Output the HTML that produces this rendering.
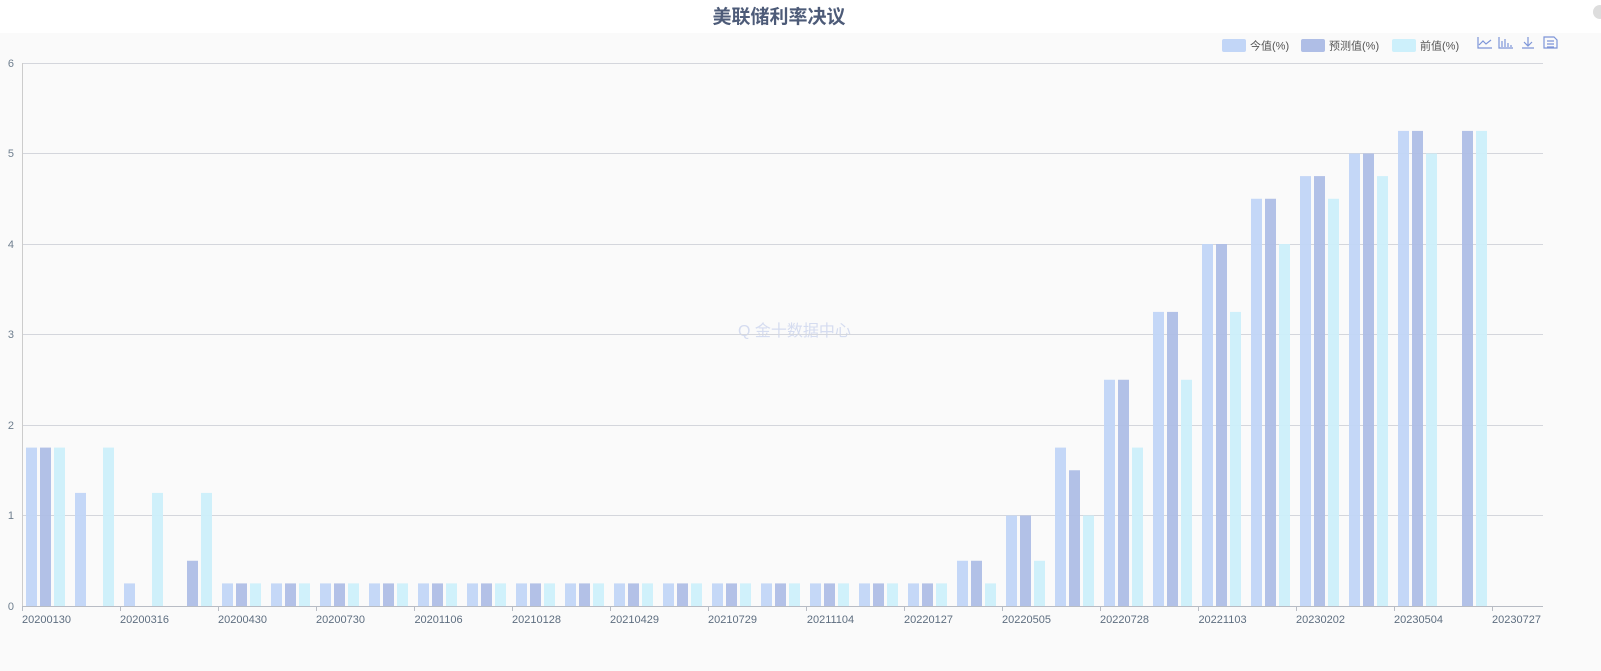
<!DOCTYPE html>
<html><head><meta charset="utf-8"><style>
html,body{margin:0;padding:0;width:1601px;height:671px;overflow:hidden;background:#fafafa;font-family:"Liberation Sans","Noto Sans CJK SC",sans-serif}
</style></head><body>
<svg width="1601" height="671" viewBox="0 0 1601 671" xmlns="http://www.w3.org/2000/svg" style="position:absolute;left:0;top:0">
<rect x="0" y="0" width="1601" height="33" fill="#fff"/>
<rect x="0" y="33" width="1601" height="638" fill="#fafafa"/>
<circle cx="1600" cy="12" r="7" fill="#ddd"/>
<text x="779" y="23" text-anchor="middle" font-size="19" font-weight="bold" fill="#4d5b78" font-family="Liberation Sans,Noto Sans CJK SC,sans-serif">美联储利率决议</text>
<!-- legend -->
<rect x="1222" y="39" width="24" height="13" rx="2" fill="#c2d6f7"/>
<text x="1250" y="49.5" font-size="11" fill="#555" font-family="Liberation Sans,Noto Sans CJK SC,sans-serif">今值(%)</text>
<rect x="1301" y="39" width="24" height="13" rx="2" fill="#afbee6"/>
<text x="1329" y="49.5" font-size="11" fill="#555" font-family="Liberation Sans,Noto Sans CJK SC,sans-serif">预测值(%)</text>
<rect x="1392" y="39" width="24" height="13" rx="2" fill="#cdf0fb"/>
<text x="1420" y="49.5" font-size="11" fill="#555" font-family="Liberation Sans,Noto Sans CJK SC,sans-serif">前值(%)</text>
<!-- toolbox icons -->
<g fill="none" stroke="#7d95d8" stroke-width="1.2">
<path d="M1478 37v11h14"/><path d="M1479 45l4-4 3 3 5-4"/>
<path d="M1499 37v11h14"/><path d="M1502 47v-6M1505 47v-8M1508 47v-4M1511 47v-2"/>
<path d="M1528 37v8M1524 42l4 4 4-4M1522 48h12"/>
<path d="M1544 37h10l3 3v8h-13z"/><path d="M1547 41h7M1547 44h7M1547 47h7"/>
</g>
<!-- watermark -->
<text x="738" y="336" font-size="16" fill="#d5dcf0" font-family="Liberation Sans,Noto Sans CJK SC,sans-serif">Q 金十数据中心</text>
<!-- grid -->
<g stroke="#d4d6dc" stroke-width="1">
<line x1="22" y1="63.5" x2="1543" y2="63.5"/>
<line x1="22" y1="153.5" x2="1543" y2="153.5"/>
<line x1="22" y1="244.5" x2="1543" y2="244.5"/>
<line x1="22" y1="334.5" x2="1543" y2="334.5"/>
<line x1="22" y1="425.5" x2="1543" y2="425.5"/>
<line x1="22" y1="515.5" x2="1543" y2="515.5"/>
</g>
<line x1="22.5" y1="63" x2="22.5" y2="606" stroke="#ccc"/>
<g font-size="11" fill="#6e7e8e" text-anchor="end" font-family="Liberation Sans,sans-serif">
<text x="14" y="67">6</text><text x="14" y="157">5</text><text x="14" y="248">4</text><text x="14" y="338">3</text><text x="14" y="429">2</text><text x="14" y="519">1</text><text x="14" y="610">0</text>
</g>
<defs>
<g id="q"><rect x="4" y="583.4" width="11" height="22.6" fill="#c2d6f7" opacity=".95"/><rect x="18" y="583.4" width="11" height="22.6" fill="#afbee6" opacity=".95"/><rect x="32" y="583.4" width="11" height="22.6" fill="#cdf0fb" opacity=".95"/></g>
</defs>
<g opacity=".95">
<!-- c1 -->
<rect x="26" y="447.6" width="11" height="158.4" fill="#c2d6f7"/><rect x="40" y="447.6" width="11" height="158.4" fill="#afbee6"/><rect x="54" y="447.6" width="11" height="158.4" fill="#cdf0fb"/>
<!-- c2 -->
<rect x="75" y="492.9" width="11" height="113.1" fill="#c2d6f7"/><rect x="103" y="447.6" width="11" height="158.4" fill="#cdf0fb"/>
<!-- c3 -->
<rect x="124" y="583.4" width="11" height="22.6" fill="#c2d6f7"/><rect x="152" y="492.9" width="11" height="113.1" fill="#cdf0fb"/>
<!-- c4 -->
<rect x="187" y="560.75" width="11" height="45.25" fill="#afbee6"/><rect x="201" y="492.9" width="11" height="113.1" fill="#cdf0fb"/>
</g>
<use href="#q" x="218"/><use href="#q" x="267"/><use href="#q" x="316"/><use href="#q" x="365"/><use href="#q" x="414"/><use href="#q" x="463"/><use href="#q" x="512"/><use href="#q" x="561"/><use href="#q" x="610"/><use href="#q" x="659"/><use href="#q" x="708"/><use href="#q" x="757"/><use href="#q" x="806"/><use href="#q" x="855"/><use href="#q" x="904"/>
<g opacity=".95">
<!-- c20 x=953 -->
<rect x="957" y="560.75" width="11" height="45.25" fill="#c2d6f7"/><rect x="971" y="560.75" width="11" height="45.25" fill="#afbee6"/><rect x="985" y="583.4" width="11" height="22.6" fill="#cdf0fb"/>
<!-- c21 1002 -->
<rect x="1006" y="515.5" width="11" height="90.5" fill="#c2d6f7"/><rect x="1020" y="515.5" width="11" height="90.5" fill="#afbee6"/><rect x="1034" y="560.75" width="11" height="45.25" fill="#cdf0fb"/>
<!-- c22 1051 -->
<rect x="1055" y="447.6" width="11" height="158.4" fill="#c2d6f7"/><rect x="1069" y="470.25" width="11" height="135.75" fill="#afbee6"/><rect x="1083" y="515.5" width="11" height="90.5" fill="#cdf0fb"/>
<!-- c23 1100 -->
<rect x="1104" y="379.75" width="11" height="226.25" fill="#c2d6f7"/><rect x="1118" y="379.75" width="11" height="226.25" fill="#afbee6"/><rect x="1132" y="447.6" width="11" height="158.4" fill="#cdf0fb"/>
<!-- c24 1149 -->
<rect x="1153" y="311.9" width="11" height="294.1" fill="#c2d6f7"/><rect x="1167" y="311.9" width="11" height="294.1" fill="#afbee6"/><rect x="1181" y="379.75" width="11" height="226.25" fill="#cdf0fb"/>
<!-- c25 1198 -->
<rect x="1202" y="244" width="11" height="362" fill="#c2d6f7"/><rect x="1216" y="244" width="11" height="362" fill="#afbee6"/><rect x="1230" y="311.9" width="11" height="294.1" fill="#cdf0fb"/>
<!-- c26 1247 -->
<rect x="1251" y="198.75" width="11" height="407.25" fill="#c2d6f7"/><rect x="1265" y="198.75" width="11" height="407.25" fill="#afbee6"/><rect x="1279" y="244" width="11" height="362" fill="#cdf0fb"/>
<!-- c27 1296 -->
<rect x="1300" y="176.1" width="11" height="429.9" fill="#c2d6f7"/><rect x="1314" y="176.1" width="11" height="429.9" fill="#afbee6"/><rect x="1328" y="198.75" width="11" height="407.25" fill="#cdf0fb"/>
<!-- c28 1345 -->
<rect x="1349" y="153.5" width="11" height="452.5" fill="#c2d6f7"/><rect x="1363" y="153.5" width="11" height="452.5" fill="#afbee6"/><rect x="1377" y="176.1" width="11" height="429.9" fill="#cdf0fb"/>
<!-- c29 1394 -->
<rect x="1398" y="130.9" width="11" height="475.1" fill="#c2d6f7"/><rect x="1412" y="130.9" width="11" height="475.1" fill="#afbee6"/><rect x="1426" y="153.5" width="11" height="452.5" fill="#cdf0fb"/>
<!-- c30 1443 -->
<rect x="1462" y="130.9" width="11" height="475.1" fill="#afbee6"/><rect x="1476" y="130.9" width="11" height="475.1" fill="#cdf0fb"/>
</g>
<line x1="22" y1="606.5" x2="1543" y2="606.5" stroke="#b8bcc4"/>
<g stroke="#b8bcc4">
<line x1="22.5" y1="606" x2="22.5" y2="611"/><line x1="120.5" y1="606" x2="120.5" y2="611"/><line x1="218.5" y1="606" x2="218.5" y2="611"/><line x1="316.5" y1="606" x2="316.5" y2="611"/><line x1="414.5" y1="606" x2="414.5" y2="611"/><line x1="512.5" y1="606" x2="512.5" y2="611"/><line x1="610.5" y1="606" x2="610.5" y2="611"/><line x1="708.5" y1="606" x2="708.5" y2="611"/><line x1="806.5" y1="606" x2="806.5" y2="611"/><line x1="904.5" y1="606" x2="904.5" y2="611"/><line x1="1002.5" y1="606" x2="1002.5" y2="611"/><line x1="1100.5" y1="606" x2="1100.5" y2="611"/><line x1="1198.5" y1="606" x2="1198.5" y2="611"/><line x1="1296.5" y1="606" x2="1296.5" y2="611"/><line x1="1394.5" y1="606" x2="1394.5" y2="611"/><line x1="1492.5" y1="606" x2="1492.5" y2="611"/>
</g>
<g font-size="11" fill="#5e6e80" text-anchor="middle" font-family="Liberation Sans,sans-serif">
<text x="46.5" y="623">20200130</text><text x="144.5" y="623">20200316</text><text x="242.5" y="623">20200430</text><text x="340.5" y="623">20200730</text><text x="438.5" y="623">20201106</text><text x="536.5" y="623">20210128</text><text x="634.5" y="623">20210429</text><text x="732.5" y="623">20210729</text><text x="830.5" y="623">20211104</text><text x="928.5" y="623">20220127</text><text x="1026.5" y="623">20220505</text><text x="1124.5" y="623">20220728</text><text x="1222.5" y="623">20221103</text><text x="1320.5" y="623">20230202</text><text x="1418.5" y="623">20230504</text><text x="1516.5" y="623">20230727</text>
</g>
</svg>
</body></html>
